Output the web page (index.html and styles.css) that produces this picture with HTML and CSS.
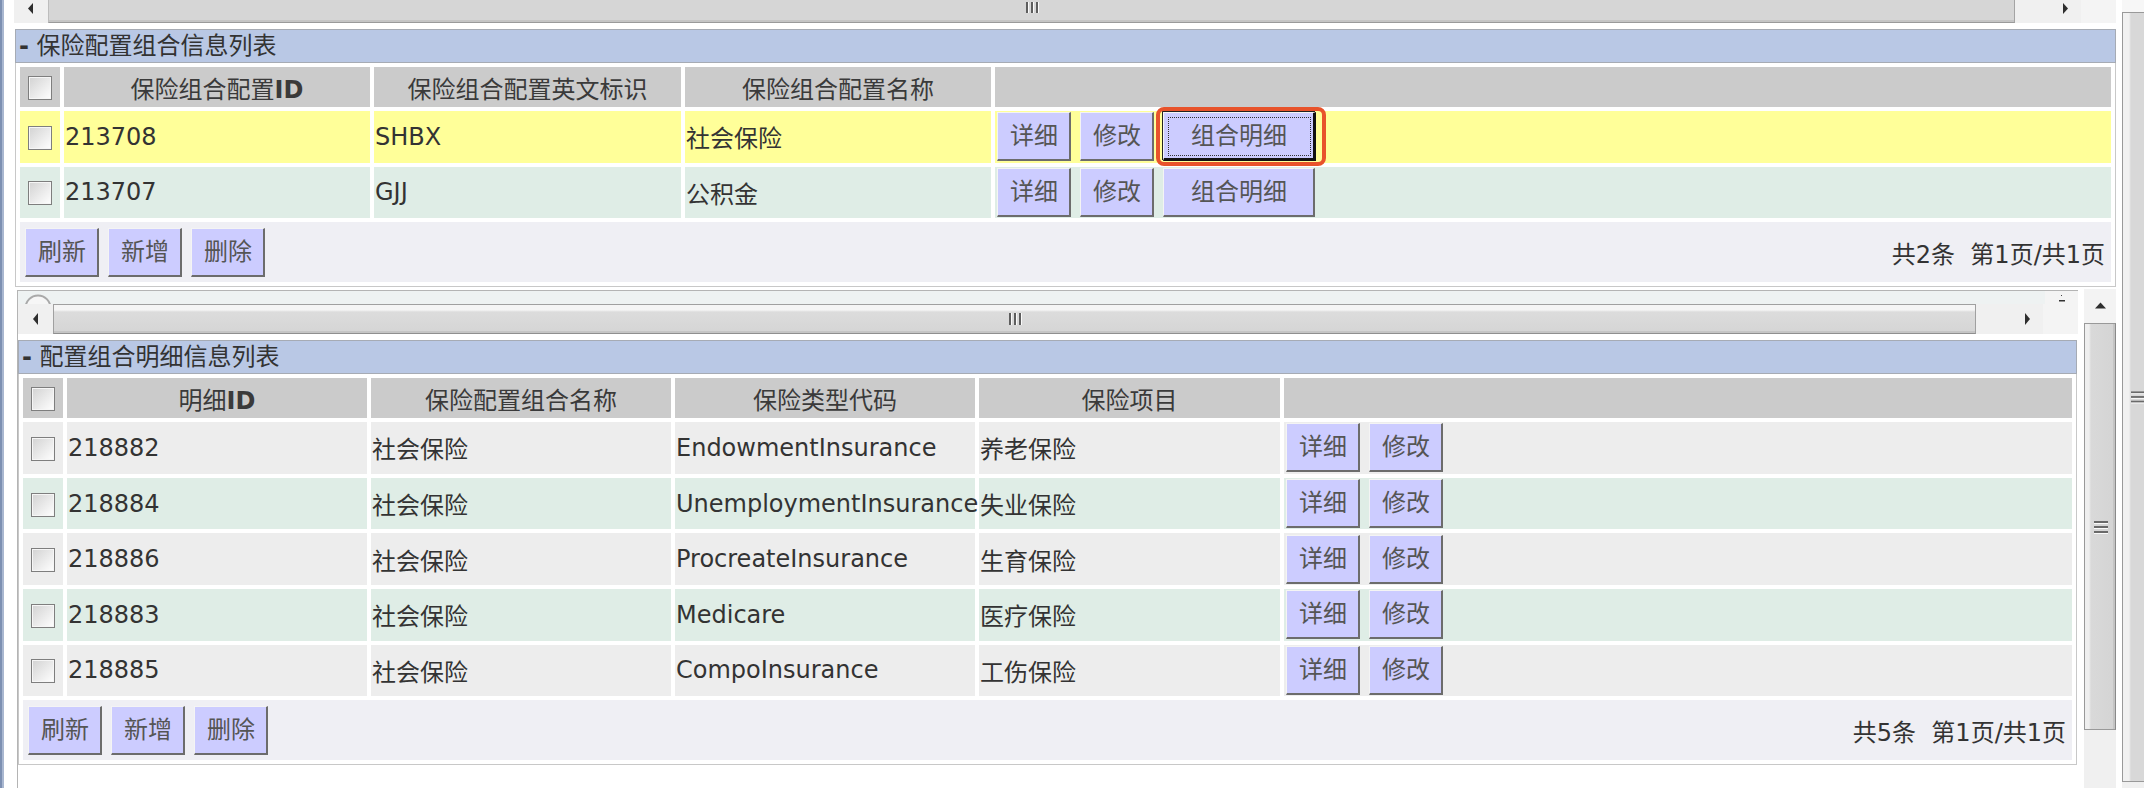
FILE: index.html
```html
<!DOCTYPE html>
<html lang="zh-CN">
<head>
<meta charset="utf-8">
<title>保险配置组合</title>
<link rel="stylesheet" href="styles.css">
</head>
<body>
<div class="screen">
  <div class="edge"></div>
  <div class="main">
    <div class="scrollrow top">
      <div class="hscroll">
        <div class="sb-btn lbtn"><svg width="6" height="11" viewBox="0 0 6 11"><path d="M5 0 L0 5.5 L5 11 Z" fill="#2e2e2e"/></svg></div>
        <div class="thumb"><svg width="14" height="11" viewBox="0 0 14 11"><g fill="#5e5e5e"><rect x="1" y="0" width="2" height="11"/><rect x="6" y="0" width="2" height="11"/><rect x="11" y="0" width="2" height="11"/></g><g fill="#fafafa"><rect x="3" y="0" width="1" height="11"/><rect x="8" y="0" width="1" height="11"/><rect x="13" y="0" width="1" height="11"/></g></svg></div>
        <div class="track-rest"></div>
        <div class="sb-btn rbtn"><svg width="6" height="11" viewBox="0 0 6 11"><path d="M1 0 L6 5.5 L1 11 Z" fill="#2e2e2e"/></svg></div>
      </div>
      <div class="corner"></div>
    </div>

    <section class="panel p1">
      <div class="ptitle"><b class="dash">-</b>&nbsp;保险配置组合信息列表</div>
      <div class="pbody">
        <table class="grid">
          <colgroup>
            <col class="c-chk"><col class="c-306"><col class="c-307"><col class="c-306"><col>
          </colgroup>
          <thead>
            <tr class="head">
              <th class="chk"><span class="cb"></span></th>
              <th>保险组合配置<b>ID</b></th>
              <th>保险组合配置英文标识</th>
              <th>保险组合配置名称</th>
              <th></th>
            </tr>
          </thead>
          <tbody>
            <tr class="r hl">
              <td class="chk"><span class="cb"></span></td>
              <td>213708</td>
              <td>SHBX</td>
              <td>社会保险</td>
              <td class="act"><div class="btns"><button class="btn">详细</button><button class="btn">修改</button><button class="btn wide focus marked">组合明细</button></div></td>
            </tr>
            <tr class="r alt">
              <td class="chk"><span class="cb"></span></td>
              <td>213707</td>
              <td>GJJ</td>
              <td>公积金</td>
              <td class="act"><div class="btns"><button class="btn">详细</button><button class="btn">修改</button><button class="btn wide">组合明细</button></div></td>
            </tr>
          </tbody>
          <tfoot>
            <tr class="f">
              <td colspan="5" class="foot-cell"><div class="foot"><div class="btns"><button class="btn">刷新</button><button class="btn">新增</button><button class="btn">删除</button></div><span class="pager">共2条&nbsp;&nbsp;第1页/共1页</span></div></td>
            </tr>
          </tfoot>
        </table>
      </div>
    </section>

    <div class="frame">
      <div class="frame-body">
        <div class="strip">
          <div class="strip-main"><svg class="ring" width="30" height="12" viewBox="0 0 30 12"><circle cx="15" cy="15" r="12.5" fill="#f6f6f6" stroke="#a9a9a9" stroke-width="2"/></svg></div>
          <div class="strip-corner"><svg width="8" height="10" viewBox="0 0 8 10"><rect x="3" y="1" width="1" height="1" fill="#444"/><rect x="1" y="6" width="6" height="1.5" fill="#333"/></svg></div>
        </div>
        <div class="scrollrow inner">
          <div class="hscroll">
            <div class="sb-btn lbtn"><svg width="6" height="12" viewBox="0 0 6 12"><path d="M5 0 L0 6 L5 12 Z" fill="#2e2e2e"/></svg></div>
            <div class="thumb"><svg width="14" height="12" viewBox="0 0 14 12"><g fill="#5e5e5e"><rect x="1" y="0" width="2" height="12"/><rect x="6" y="0" width="2" height="12"/><rect x="11" y="0" width="2" height="12"/></g><g fill="#fafafa"><rect x="3" y="0" width="1" height="12"/><rect x="8" y="0" width="1" height="12"/><rect x="13" y="0" width="1" height="12"/></g></svg></div>
            <div class="track-rest"></div>
            <div class="sb-btn rbtn"><svg width="6" height="12" viewBox="0 0 6 12"><path d="M1 0 L6 6 L1 12 Z" fill="#2e2e2e"/></svg></div>
          </div>
          <div class="corner"></div>
        </div>

        <section class="panel p2">
          <div class="ptitle"><b class="dash">-</b>&nbsp;配置组合明细信息列表</div>
          <div class="pbody">
            <table class="grid">
              <colgroup>
                <col class="c-chk"><col class="c-300"><col class="c-300"><col class="c-300"><col class="c-301"><col>
              </colgroup>
              <thead>
                <tr class="head">
                  <th class="chk"><span class="cb"></span></th>
                  <th>明细<b>ID</b></th>
                  <th>保险配置组合名称</th>
                  <th>保险类型代码</th>
                  <th>保险项目</th>
                  <th></th>
                </tr>
              </thead>
              <tbody>
                <tr class="r plain">
                  <td class="chk"><span class="cb"></span></td>
                  <td>218882</td><td>社会保险</td><td>EndowmentInsurance</td><td>养老保险</td>
                  <td class="act"><div class="btns"><button class="btn">详细</button><button class="btn">修改</button></div></td>
                </tr>
                <tr class="r alt">
                  <td class="chk"><span class="cb"></span></td>
                  <td>218884</td><td>社会保险</td><td>UnemploymentInsurance</td><td>失业保险</td>
                  <td class="act"><div class="btns"><button class="btn">详细</button><button class="btn">修改</button></div></td>
                </tr>
                <tr class="r plain">
                  <td class="chk"><span class="cb"></span></td>
                  <td>218886</td><td>社会保险</td><td>ProcreateInsurance</td><td>生育保险</td>
                  <td class="act"><div class="btns"><button class="btn">详细</button><button class="btn">修改</button></div></td>
                </tr>
                <tr class="r alt">
                  <td class="chk"><span class="cb"></span></td>
                  <td>218883</td><td>社会保险</td><td>Medicare</td><td>医疗保险</td>
                  <td class="act"><div class="btns"><button class="btn">详细</button><button class="btn">修改</button></div></td>
                </tr>
                <tr class="r plain">
                  <td class="chk"><span class="cb"></span></td>
                  <td>218885</td><td>社会保险</td><td>CompoInsurance</td><td>工伤保险</td>
                  <td class="act"><div class="btns"><button class="btn">详细</button><button class="btn">修改</button></div></td>
                </tr>
              </tbody>
              <tfoot>
                <tr class="f">
                  <td colspan="6" class="foot-cell"><div class="foot"><div class="btns"><button class="btn">刷新</button><button class="btn">新增</button><button class="btn">删除</button></div><span class="pager">共5条&nbsp;&nbsp;第1页/共1页</span></div></td>
                </tr>
              </tfoot>
            </table>
          </div>
        </section>
      </div>
      <div class="vscroll inner">
        <div class="sb-up"><svg width="11" height="7" viewBox="0 0 11 7"><path d="M0 6.5 L5.5 0.5 L11 6.5 Z" fill="#2e2e2e"/></svg></div>
        <div class="vthumb"><svg width="14" height="14" viewBox="0 0 14 14"><g fill="#6a6a6a"><rect x="0" y="1" width="14" height="2"/><rect x="0" y="6" width="14" height="2"/><rect x="0" y="11" width="14" height="2"/></g><g fill="#fafafa"><rect x="0" y="3" width="14" height="1"/><rect x="0" y="8" width="14" height="1"/><rect x="0" y="13" width="14" height="1"/></g></svg></div>
        <div class="vrest"></div>
      </div>
    </div>
  </div>
  <div class="vscroll outer">
    <div class="otop"></div>
    <div class="othumb"><svg width="14" height="14" viewBox="0 0 14 14"><g fill="#6a6a6a"><rect x="0" y="1" width="14" height="2"/><rect x="0" y="6" width="14" height="2"/><rect x="0" y="11" width="14" height="2"/></g><g fill="#fafafa"><rect x="0" y="3" width="14" height="1"/><rect x="0" y="8" width="14" height="1"/><rect x="0" y="13" width="14" height="1"/></g></svg></div>
    <div class="orest"></div>
  </div>
</div>
</body>
</html>
```
FILE: styles.css
```css
* { box-sizing: border-box; }
html, body { margin: 0; padding: 0; }
body {
  width: 2144px;
  height: 788px;
  overflow: hidden;
  background: #fff;
  font-family: "DejaVu Sans", "Noto Sans CJK SC", sans-serif;
  font-size: 24px;
  color: #333;
}
.screen { display: flex; height: 788px; }
.edge {
  width: 4px;
  flex: none;
  background: linear-gradient(to right, #7d90b2 0, #7d90b2 2px, #a9b7d0 2px, #a9b7d0 4px);
}
.main {
  flex: 1;
  min-width: 0;
  padding: 0 6px 0 10px;
  display: flex;
  flex-direction: column;
}

/* horizontal scrollbars */
.scrollrow { display: flex; flex: none; }
.scrollrow.top { height: 23px; }
.scrollrow.inner { height: 30px; }
.hscroll { display: flex; background: #f0f0f0; }
.scrollrow.top .hscroll { width: 2067px; }
.scrollrow.inner .hscroll { width: 2025px; }
.corner { flex: 1; background: #f4f4f4; }
.sb-btn { flex: none; display: flex; justify-content: center; }
.scrollrow.top .sb-btn { align-items: flex-start; padding-top: 3px; }
.scrollrow.inner .sb-btn { align-items: center; }
.scrollrow.top .lbtn { width: 34px; }
.scrollrow.top .rbtn { width: 35px; padding-left: 3px; }
.scrollrow.inner .lbtn { width: 35px; }
.scrollrow.inner .rbtn { width: 35px; padding-left: 3px; }
.track-rest { flex: 1; }
.thumb {
  flex: none;
  display: flex;
  justify-content: center;
  background: #d6d6d6;
}
.scrollrow.top .thumb {
  width: 1967px;
  align-items: flex-start;
  padding-top: 2px;
  border-left: 1px solid #bdbdbd;
  border-right: 1px solid #a4a4a4;
  border-bottom: 1px solid #9a9a9a;
  box-shadow: inset 0 -2px 0 #c5c5c5;
}
.scrollrow.inner .thumb {
  width: 1923px;
  align-items: center;
  border: 1px solid #a0a0a0;
  border-bottom-color: #8f8f8f;
  background: linear-gradient(#f5f5f5 0, #f5f5f5 5px, #dcdcdc 7px, #d5d5d5 100%);
  box-shadow: inset 0 -2px 0 #c5c5c5;
}

/* panels */
.panel { flex: none; }
.p1 { width: 2101px; margin: 6px 0 0 1px; }
.p2 { width: 2059px; margin-top: 6px; }
.ptitle {
  height: 34px;
  border: 1px solid #a6abb4;
  background: #b9c8e5;
  line-height: 32px;
  padding-left: 3px;
  color: #333;
  white-space: nowrap;
}
.dash { font-weight: bold; }
.pbody { border: 1px solid #c8c8c8; border-top: none; background: #fff; }
.grid {
  width: 100%;
  border-collapse: separate;
  border-spacing: 4px;
  table-layout: fixed;
}
.c-chk { width: 40px; }
.c-306 { width: 306px; }
.c-307 { width: 307px; }
.c-300 { width: 300px; }
.c-301 { width: 301px; }
.grid th, .grid td {
  padding: 0 1px;
  white-space: nowrap;
  overflow: visible;
  vertical-align: middle;
}
.grid th {
  background: #cbcbcb;
  font-weight: normal;
  color: #3a3a3a;
  text-align: center;
}
.grid th b { font-weight: bold; }
.head { height: 40px; }
.r { height: 51.6px; }
.f { height: 60px; }
.hl td { background: #ffff99; }
.alt td { background: #dfede6; }
.plain td { background: #ededed; }
.grid td.chk, .grid th.chk { text-align: center; padding: 0; }
.cb {
  display: inline-block;
  width: 24px;
  height: 24px;
  vertical-align: middle;
  border: 1px solid #7e7e7e;
  background: linear-gradient(135deg, #d2d2d2 0%, #ebebeb 55%, #ffffff 100%);
  box-shadow: inset 0 0 0 1px #f6f6f6;
}
.grid td.act { padding: 0 0 0 2px; }
.btns { display: flex; gap: 9px; align-items: center; }
.btn {
  font: inherit;
  color: #555;
  background: #ccccff;
  height: 49px;
  margin: 0;
  padding: 0 11px 0 12px;
  border-style: solid;
  border-width: 1px 2px 2px 1px;
  border-color: #f4f4f4 #6c6c6c #6c6c6c #f4f4f4;
  line-height: 1;
  position: relative;
  cursor: default;
}
.btn.wide { padding: 0 26px 0 27px; }
.btn.focus {
  border-color: #f4f4f4 #111 #111 #f4f4f4;
  border-width: 1px 3px 3px 1px;
  box-shadow: -1px -1px 0 #222;
  outline: 1px dotted #333;
  outline-offset: -6px;
}
.btn.marked::after {
  content: "";
  position: absolute;
  left: -8px;
  top: -6px;
  width: 162px;
  height: 51px;
  border: 4px solid #e8532b;
  border-radius: 8px;
  pointer-events: none;
}
.foot-cell { background: #efeff4; padding: 0 6px 0 5px !important; }
.foot { display: flex; justify-content: space-between; align-items: center; }
.pager { color: #333; }

/* inner frame */
.frame {
  flex: 1;
  min-height: 0;
  display: flex;
  margin: 3px 0 0 3px;
}
.frame-body {
  width: 2061px;
  flex: none;
  border-left: 1px solid #b4b4b4;
  border-top: 1px solid #b4b4b4;
  display: flex;
  flex-direction: column;
}
.strip { height: 13px; display: flex; flex: none; }
.strip-main { width: 2027px; background: #eef2f2; padding-left: 5px; overflow: hidden; }
.ring { display: block; margin-top: 2px; }
.strip-corner {
  flex: 1;
  background: #f4f4f4;
  display: flex;
  justify-content: center;
  align-items: flex-end;
}

/* vertical scrollbars */
.vscroll { flex: none; display: flex; flex-direction: column; }
.vscroll.inner { width: 32px; margin: -1px 0 0 6px; background: #f0f0f0; }
.sb-up {
  height: 34px;
  display: flex;
  justify-content: center;
  align-items: center;
  padding-bottom: 2px;
  background: #f3f3f3;
}
.vthumb {
  height: 407px;
  display: flex;
  justify-content: center;
  align-items: center;
  border: 1px solid #999;
  border-right-color: #8a8a8a;
  background: linear-gradient(to right, #efefef 0, #efefef 4px, #d9d9d9 6px, #d4d4d4 100%);
  box-shadow: inset -2px 0 0 #c4c4c4;
  padding-left: 2px;
}
.vrest { flex: 1; }
.vscroll.outer { width: 22px; background: #f0f0f0; }
.otop { height: 12px; background: #f7f7f7; }
.othumb {
  height: 770px;
  display: flex;
  align-items: center;
  padding-left: 8px;
  border-left: 1px solid #999;
  border-top: 1px solid #999;
  border-bottom: 1px solid #999;
  background: linear-gradient(to right, #f1f1f1 0, #f1f1f1 6px, #d8d8d8 8px, #d8d8d8 100%);
  overflow: hidden;
}
.orest { flex: 1; }
```
